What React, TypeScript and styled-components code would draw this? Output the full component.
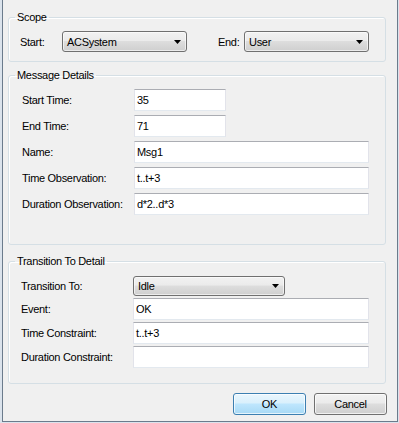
import { createGlobalStyle, styled } from 'styled-components'

const GlobalStyle = createGlobalStyle`
    body {
        margin: 0;
        background: #dbe3ec;
        font-family: "Liberation Sans", Arial, sans-serif;
        font-size: 11px;
        letter-spacing: -0.3px;
        color: #000;
    }
`;

const Dialog = styled.div`
    box-sizing: border-box;
    margin-left: 2px;
    width: 396px;
    height: 422px;
    border: 1px solid #6b7b8c;
    border-top: none;
    background: #f0f0f0;
    padding: 11px 10px 0 5px;
    display: flex;
    flex-direction: column;
`;

const Group = styled.fieldset<{ $top?: number; $bottom: number }>`
    margin: ${p => p.$top ?? 0}px 1px 0 0;
    padding: 0 0 ${p => p.$bottom}px 0;
    border: 1px solid #d5dfe5;
    border-radius: 3px;
    box-shadow: inset 1px 1px 0 #fff;
    min-width: 0;
`;

const Legend = styled.legend`
    margin-left: 6px;
    padding: 0 2px;
    line-height: 13px;
    font-size: 11px;
`;

const Rows = styled.div<{ $top: number; $gap: number }>`
    display: flex;
    flex-direction: column;
    gap: ${p => p.$gap}px;
    padding-top: ${p => p.$top}px;
`;

const Row = styled.div<{ $h: number; $indent: number }>`
    display: flex;
    align-items: center;
    height: ${p => p.$h}px;
    padding-left: ${p => p.$indent}px;
`;

const Label = styled.span<{ $w: number; $ml?: number }>`
    width: ${p => p.$w}px;
    margin-left: ${p => p.$ml ?? 0}px;
    flex: none;
    white-space: nowrap;
`;

const TextBox = styled.div<{ $w: number }>`
    box-sizing: border-box;
    width: ${p => p.$w}px;
    height: 22px;
    background: #fff;
    border: 1px solid #e2e3ea;
    border-top-color: #abadb3;
    border-bottom-color: #e3e9ef;
    padding: 0 2px;
    display: flex;
    align-items: center;
    line-height: 13px;
`;

const Combo = styled.div<{ $w: number; $h: number }>`
    box-sizing: border-box;
    width: ${p => p.$w}px;
    height: ${p => p.$h}px;
    border: 1px solid #707070;
    border-radius: 3px;
    background: linear-gradient(#f2f2f2 0%, #ebebeb 45%, #dddddd 50%, #cfcfcf 100%);
    box-shadow: inset 0 0 0 1px rgba(255, 255, 255, 0.6);
    display: flex;
    align-items: center;
    justify-content: space-between;
    padding: 0 5px 0 4px;
`;

const Arrow = () => (
    <svg width="7" height="4" viewBox="0 0 7 4">
        <polygon points="0,0 7,0 3.5,4" fill="#000" />
    </svg>
);

const Buttons = styled.div`
    display: flex;
    justify-content: flex-end;
    gap: 8px;
    margin-top: 9px;
`;

const Button = styled.div<{ $default?: boolean }>`
    box-sizing: border-box;
    width: 73px;
    height: 22px;
    border-radius: 3px;
    display: flex;
    align-items: center;
    justify-content: center;
    border: 1px solid ${p => (p.$default ? '#3c7fb1' : '#707070')};
    background: ${p => p.$default
        ? 'linear-gradient(#eaf6fd 0%, #d9f0fc 45%, #bee6fd 50%, #a7d9f5 100%)'
        : 'linear-gradient(#f2f2f2 0%, #ebebeb 45%, #dddddd 50%, #cfcfcf 100%)'};
    box-shadow: inset 0 0 0 1px rgba(255, 255, 255, 0.7);
`;

const messageRows = [
    { label: 'Start Time:', value: '35', w: 92 },
    { label: 'End Time:', value: '71', w: 92 },
    { label: 'Name:', value: 'Msg1', w: 235 },
    { label: 'Time Observation:', value: 't..t+3', w: 235 },
    { label: 'Duration Observation:', value: 'd*2..d*3', w: 235 },
];

const transitionRows = [
    { label: 'Event:', value: 'OK' },
    { label: 'Time Constraint:', value: 't..t+3' },
    { label: 'Duration Constraint:', value: '' },
];

export default function App() {
    return (
        <>
            <GlobalStyle />
            <Dialog>
                <Group $bottom={9}>
                    <Legend>Scope</Legend>
                    <Rows $top={7} $gap={0}>
                        <Row $h={21} $indent={11}>
                            <Label $w={42}>Start:</Label>
                            <Combo $w={125} $h={21}>ACSystem<Arrow /></Combo>
                            <Label $w={26} $ml={31}>End:</Label>
                            <Combo $w={125} $h={21}>User<Arrow /></Combo>
                        </Row>
                    </Rows>
                </Group>

                <Group $top={7} $bottom={29}>
                    <Legend>Message Details</Legend>
                    <Rows $top={7} $gap={4}>
                        {messageRows.map(r => (
                            <Row key={r.label} $h={22} $indent={13}>
                                <Label $w={112}>{r.label}</Label>
                                <TextBox $w={r.w}>{r.value}</TextBox>
                            </Row>
                        ))}
                    </Rows>
                </Group>

                <Group $top={10} $bottom={15}>
                    <Legend>Transition To Detail</Legend>
                    <Rows $top={8} $gap={2}>
                        <Row $h={20} $indent={12}>
                            <Label $w={112}>Transition To:</Label>
                            <Combo $w={152} $h={20}>Idle<Arrow /></Combo>
                        </Row>
                        {transitionRows.map(r => (
                            <Row key={r.label} $h={22} $indent={12}>
                                <Label $w={112}>{r.label}</Label>
                                <TextBox $w={236}>{r.value}</TextBox>
                            </Row>
                        ))}
                    </Rows>
                </Group>

                <Buttons>
                    <Button $default>OK</Button>
                    <Button>Cancel</Button>
                </Buttons>
            </Dialog>
        </>
    )
}
